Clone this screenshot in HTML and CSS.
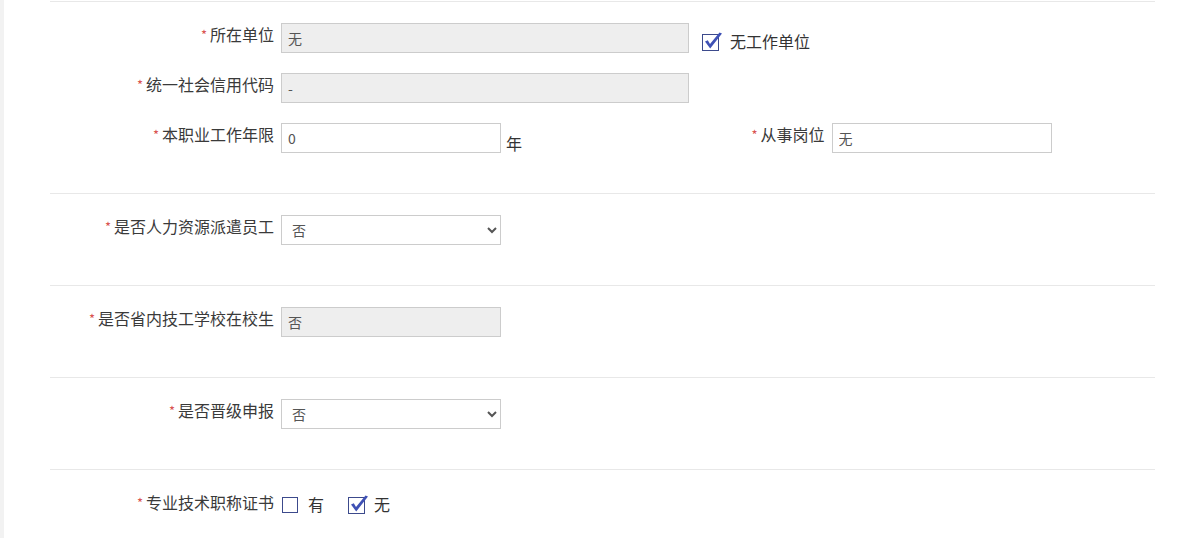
FILE: index.html
```html
<!DOCTYPE html>
<html>
<head>
  <meta http-equiv="Content-type" content="text/html; charset=utf-8">
  <title>职业信息</title>
  <link rel="stylesheet" href="styles.css">
</head>
<body>
  <div class="page">
    <div class="section">
      <div class="row">
        <label class="label"><span class="req">*</span>所在单位</label>
        <input class="field wide" type="text" value="无" disabled>
        <label class="check">
          <svg class="box" width="22" height="20" viewBox="0 0 22 20"><rect x="1.5" y="3.5" width="16" height="16" fill="#fff" stroke="#3c4a8c"/><path d="M4 10.5 L6.8 9.2 L9 13 L18.5 1.5 L21 2.6 L9.2 17.5 Z" fill="#3f51b5"/></svg>
          无工作单位
        </label>
      </div>
      <div class="row">
        <label class="label"><span class="req">*</span>统一社会信用代码</label>
        <input class="field wide" type="text" value="-" disabled>
      </div>
      <div class="row">
        <div class="half">
          <label class="label"><span class="req">*</span>本职业工作年限</label>
          <input class="field" type="text" value="0">
          <span class="unit">年</span>
        </div>
        <div class="half">
          <label class="label"><span class="req">*</span>从事岗位</label>
          <input class="field" type="text" value="无">
        </div>
      </div>
    </div>

    <div class="section">
      <div class="row">
        <label class="label"><span class="req">*</span>是否人力资源派遣员工</label>
        <select class="field">
          <option>否</option>
          <option>是</option>
        </select>
      </div>
    </div>

    <div class="section">
      <div class="row">
        <label class="label"><span class="req">*</span>是否省内技工学校在校生</label>
        <input class="field" type="text" value="否" disabled>
      </div>
    </div>

    <div class="section">
      <div class="row">
        <label class="label"><span class="req">*</span>是否晋级申报</label>
        <select class="field">
          <option>否</option>
          <option>是</option>
        </select>
      </div>
    </div>

    <div class="section">
      <div class="row">
        <label class="label"><span class="req">*</span>专业技术职称证书</label>
        <div class="options">
          <label class="option">
            <svg class="box" width="22" height="20" viewBox="0 0 22 20"><rect x="1.5" y="3.5" width="15" height="15" fill="#fff" stroke="#3c4a8c"/></svg>
            有
          </label>
          <label class="option">
            <svg class="box" width="22" height="20" viewBox="0 0 22 20"><rect x="1.5" y="3.5" width="16" height="16" fill="#fff" stroke="#3c4a8c"/><path d="M4 10.5 L6.8 9.2 L9 13 L18.5 1.5 L21 2.6 L9.2 17.5 Z" fill="#3f51b5"/></svg>
            无
          </label>
        </div>
      </div>
    </div>
  </div>
</body>
</html>
```

FILE: styles.css
```css
body {
  margin: 0;
  background-color: #fff;
  color: #333;
  font-family: "Noto Sans CJK SC", "Microsoft YaHei", sans-serif;
  border-left: 4px solid #f2f2f2;
  min-height: 538px;
  box-sizing: border-box;
}
.page {
  padding: 1px 0 0 46px;
  width: 1105px;
}
.section {
  border-top: 1px solid #e8e8e8;
  padding: 21px 0 40px 0;
  display: flex;
  flex-direction: column;
  gap: 20px;
}
.row {
  display: flex;
  align-items: flex-start;
  height: 30px;
}
.half {
  display: flex;
  align-items: flex-start;
  flex: 0 0 50%;
}
.label {
  flex: 0 0 231px;
  box-sizing: border-box;
  padding-right: 7px;
  text-align: right;
  font-size: 16px;
  line-height: 23px;
  white-space: nowrap;
  color: #3a3a3a;
}
.half + .half .label {
  flex-basis: 229px;
}
.req {
  color: #d9534f;
  font-size: 13px;
  vertical-align: top;
  line-height: 24px;
  margin-right: 3px;
}
.field {
  box-sizing: border-box;
  width: 220px;
  height: 30px;
  border: 1px solid #ccc;
  background-color: #fff;
  color: #555;
  font-family: inherit;
  font-size: 14px;
  padding: 0 6px;
  margin: 0;
  border-radius: 0;
  outline: none;
}
.field:disabled {
  background-color: #eee;
  color: #555;
}
.wide {
  width: 408px;
}
.check {
  display: flex;
  align-items: center;
  gap: 7px;
  margin-left: 12px;
  margin-top: 8px;
  font-size: 16px;
  line-height: 20px;
}
.unit {
  font-size: 16px;
  line-height: 20px;
  margin-left: 5px;
  margin-top: 10px;
}
.options {
  display: flex;
  align-items: center;
  height: 30px;
}
.option {
  display: flex;
  align-items: center;
  gap: 5px;
  margin-right: 23px;
  font-size: 16px;
  line-height: 20px;
  margin-top: -5px;
}
.box {
  display: block;
}
```
